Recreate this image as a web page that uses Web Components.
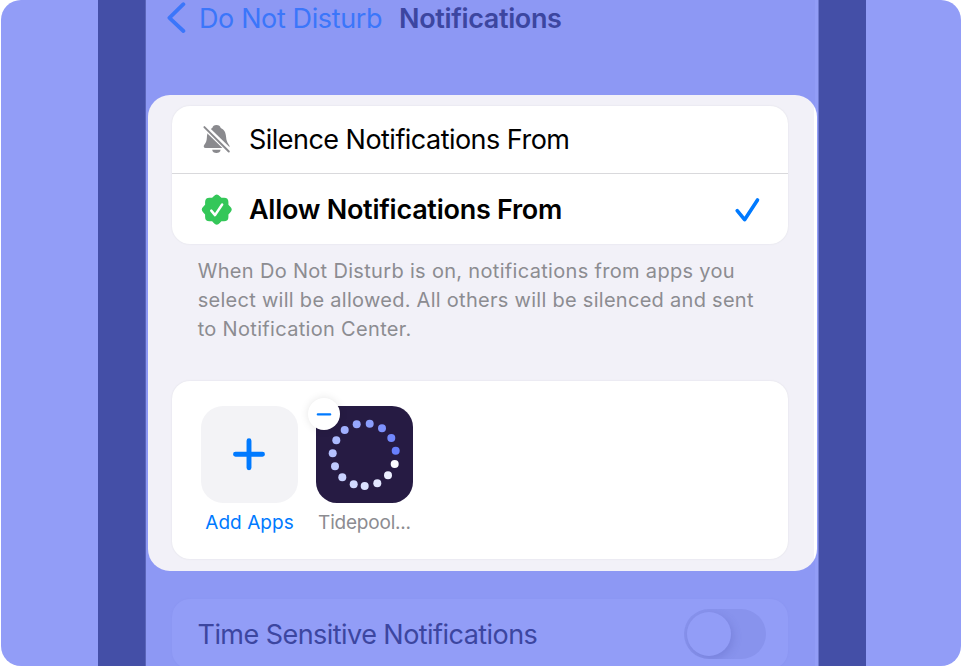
<!DOCTYPE html>
<html lang="en">
<head>
<meta charset="utf-8">
<title>Notifications</title>
<style>
html,body{margin:0;background:#fff;overflow:hidden}
body{font-family:Inter,"Liberation Sans",sans-serif;width:961px;height:667px}
</style>
</head>
<body>
<phone-stage>
  <nav-header back="Do Not Disturb">Notifications</nav-header>
  <focus-panel>
    <option-list>
      <option-row kind="silence">Silence Notifications From</option-row>
      <option-row kind="allow" checked>Allow Notifications From</option-row>
    </option-list>
    <foot-note><div>When Do Not Disturb is on, notifications from apps you</div><div style="letter-spacing:.28px">select will be allowed. All others will be silenced and sent</div><div>to Notification Center.</div></foot-note>
    <app-grid>
      <app-tile kind="add">Add Apps</app-tile>
      <app-tile kind="tidepool">Tidepool...</app-tile>
    </app-grid>
  </focus-panel>
  <toggle-row>Time Sensitive Notifications</toggle-row>
</phone-stage>
<script>
function define(name, markup) {
  customElements.define(name, class extends HTMLElement {
    constructor() {
      super();
      this.attachShadow({mode: 'open'}).innerHTML = typeof markup === 'function' ? markup(this) : markup;
    }
  });
}

define('phone-stage', `<style>
:host{display:grid;grid-template-columns:97px 48px 673px 47px 1fr;box-sizing:border-box;width:960px;height:666px;margin-left:1px;border-radius:20px;overflow:hidden;background:#929df7}
.bar{background:#444fa7}
.bar.left{background:linear-gradient(90deg,#444fa7 47px,#5a65b9 47px)}
.screen{background:linear-gradient(90deg,#8d98f4 669px,#929df7 669px 672px,#6f7acf 672px);display:flex;flex-direction:column;overflow:hidden;height:666px}
</style><div></div><div class="bar left"></div><div class="screen"><slot></slot></div><div class="bar"></div><div></div>`);

define('nav-header', el => `<style>
:host{display:flex;align-items:center;height:36px;flex:none;margin-bottom:59px;padding-left:20px;font-size:27px;line-height:36px;white-space:nowrap}
svg{width:20px;height:36px;flex:none}
span{padding-top:1.500px}
.back{color:#3b76fa;margin-left:13px;width:200px;letter-spacing:-.38px}
.title{color:#3c46a0;font-weight:600;letter-spacing:-.35px}
</style><svg viewBox="0 0 20 36"><path d="M17.4 4.2 3.4 17.8 17.4 31" fill="none" stroke="#3b76fa" stroke-width="3.8" stroke-linecap="round" stroke-linejoin="round"/></svg><span class="back">${el.getAttribute('back')}</span><span class="title"><slot></slot></span>`);

define('focus-panel', `<style>
:host{display:flex;flex-direction:column;box-sizing:border-box;width:669px;height:476px;flex:none;margin-left:2.4px;padding:11px 0 0 23.6px;border-radius:22px;background:linear-gradient(90deg,#f2f1f8 666px,#fff 666px);overflow:hidden}
</style><slot></slot>`);

define('option-list', `<style>
:host{display:block;width:616px;height:138px;flex:none;background:#fff;border-radius:18px;overflow:hidden;box-shadow:0 0 2px #dedee4}
</style><slot></slot>`);

const BELL = `<svg viewBox="0 0 32 34"><g fill="#8a8a8e"><path d="M16.4 3c-2.2 0-3.7 1.2-4.1 3-3.7 1.7-5.1 4.9-5.4 9.2-.2 3.3-.8 5.3-2.4 7.4-1.4 1.8-.9 3.5 1.2 3.5h22c2 0 2.5-1.9 1-3.6-1.7-2-2.4-4.3-2.6-7.4-.3-4.2-1.6-7.4-5.4-9.1C20.3 4.2 18.800 3 16.400 3z"/><path d="M12.200 27.700h8.400c-.2 2.100-1.900 3.300-4.200 3.300s-4-1.200-4.200-3.300z"/></g><path d="M3.500 3.700 30.300 29.800" stroke="#fff" stroke-width="5.600"/><path d="M4.400 5.100 28.800 29.500" stroke="#8a8a8e" stroke-width="2" stroke-linecap="round"/></svg>`;
const SEAL = `<svg viewBox="0.500 1.100 29.600 31.500"><path d="M13.200 4q2.800-3 5.600 0l1.500 1.500h2.500q4 0 4 4v2.500l1.500 1.600q3.200 2.900 0 5.800l-1.500 1.600v2.300q0 4-4 4h-2.500L18.800 29q-2.800 3-5.600 0l-1.500-1.700H9.200q-4 0-4-4V21l-1.500-1.600q-3.200-2.900 0-5.800L5.200 12V9.500q0-4 4-4h2.500z" fill="#34c759"/><path d="m10.900 17.400 3.500 4.200 6.600-9.900" fill="none" stroke="#fff" stroke-width="2.300" stroke-linecap="round" stroke-linejoin="round"/></svg>`;
define('option-row', el => {
  const allow = el.getAttribute('kind') === 'allow';
  return `<style>
:host{display:flex;align-items:center;box-sizing:border-box;height:${allow ? 70 : 68}px;padding-left:28.500px;padding-right:23px;font-size:27px;line-height:36px;color:#000;white-space:nowrap;${allow ? 'padding-top:2px;font-weight:600;letter-spacing:-.26px' : 'padding-bottom:1px;letter-spacing:-.53px;border-bottom:1px solid #d9d9dc'}}
svg{width:32px;height:34px;flex:none}
.text{margin-left:16.500px;flex:1;${allow ? '' : 'padding-top:2px'}}
.check{width:34px;height:34px}
</style>${allow ? SEAL : BELL}<span class="text"><slot></slot></span>${el.hasAttribute('checked') ? '<svg class="check" viewBox="0 0 34 34"><path d="m6.200 17.700 7.400 9L26.500 7" fill="none" stroke="#007aff" stroke-width="3.600" stroke-linecap="round" stroke-linejoin="round"/></svg>' : ''}`;
});

define('foot-note', `<style>
:host{display:block;height:137px;flex:none;box-sizing:border-box;padding:13px 0 0 25.700px;font-size:20px;line-height:29px;color:#8c8c91;letter-spacing:.32px;white-space:nowrap}
</style><slot></slot>`);

define('app-grid', `<style>
:host{display:flex;box-sizing:border-box;width:616px;height:178px;flex:none;padding:25px 29px;gap:18px;background:#fff;border-radius:18px;box-shadow:0 0 2px #dedee4}
</style><slot></slot>`);

const DOTS = [[53.7,17.7,'#8b9efc'],[66,22.3,'#7e92fd'],[75.3,32,'#7288fc'],[79.7,44.7,'#687ffc'],[78.7,58,'#fcfcff'],[72,69.3,'#edf0ff'],[61.3,77.3,'#e3e7ff'],[48.700,80,'#dbe1ff'],[37.700,78.300,'#d1d9ff'],[26.300,71.300,'#c9d2ff'],[19,60.300,'#bfcaff'],[16.700,47.300,'#b5c1ff'],[20.300,34.300,'#acbaff'],[28.700,24,'#a1b0ff'],[40.700,18.300,'#96a7fe']];
define('app-tile', el => {
  const add = el.getAttribute('kind') === 'add';
  const art = add
    ? '<path d="M48 34.800v27M34.500 48.300h27" stroke="#007aff" stroke-width="4.900" stroke-linecap="round"/>'
    : DOTS.map(([x, y, c]) => `<circle cx="${x}" cy="${y}" r="4" fill="${c}"/>`).join('');
  return `<style>
:host{display:flex;flex-direction:column;align-items:center;width:97px;flex:none;position:relative}
.icon{width:97px;height:97px;border-radius:${add ? 22 : 21}px;background:${add ? '#f3f3f6' : '#261b43'}}
svg{display:block}
.label{margin-top:7px;font-size:19px;line-height:26px;white-space:nowrap;color:${add ? '#007aff' : '#8c8c91'};letter-spacing:${add ? '.05' : '-.2'}px}
.badge{position:absolute;left:-8px;top:-8px;width:32px;height:32px;border-radius:50%;background:#fff;box-shadow:0 0 8px rgba(0,0,0,.1)}
</style><div class="icon"><svg width="97" height="97">${art}</svg></div>${add ? '' : '<div class="badge"><svg width="32" height="32"><path d="M9.800 16.400h12.400" stroke="#007aff" stroke-width="2.200" stroke-linecap="round"/></svg></div>'}<span class="label"><slot></slot></span>`;
});

define('toggle-row', `<style>
:host{display:flex;align-items:center;box-sizing:border-box;width:616px;height:70px;flex:none;margin:28px 0 0 26px;padding:0 22px 0 25.500px;border-radius:18px;background:#929df7;color:#3c46a0;font-size:27px;line-height:36px;letter-spacing:-.55px;white-space:nowrap;box-shadow:0 0 2px #8993ee}
.text{flex:1;padding-top:2px}
.switch{display:flex;box-sizing:border-box;width:82px;height:50px;padding:3px;border-radius:25px;background:#8893ed;overflow:hidden}
.knob{width:44px;height:44px;border-radius:50%;background:#929df7;box-shadow:2px 3px 9px rgba(70,80,170,.25)}
</style><span class="text"><slot></slot></span><div class="switch"><div class="knob"></div></div>`);
</script>
</body>
</html>
